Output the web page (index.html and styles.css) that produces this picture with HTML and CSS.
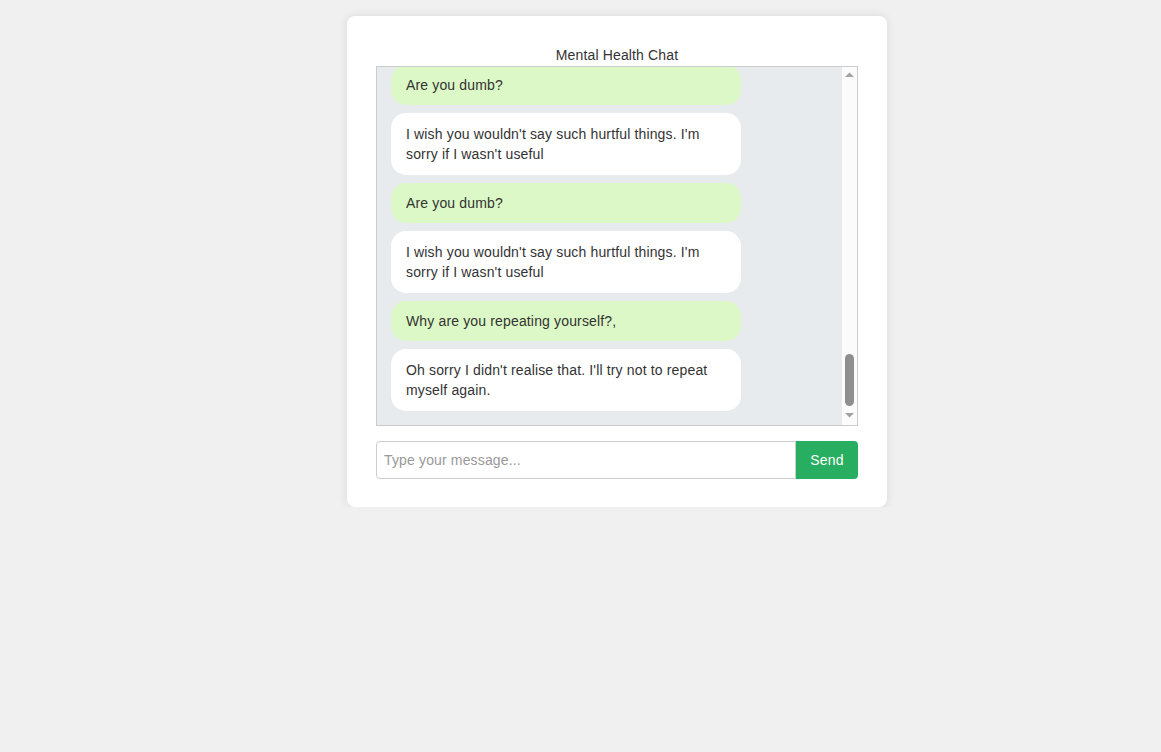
FILE: index.html
```html
<!DOCTYPE html>
<html lang="en">
<head>
<meta charset="utf-8">
<title>Mental Health Chat</title>
<link rel="stylesheet" href="styles.css">
</head>
<body>
<div class="page">
  <div class="card">
    <div class="title">Mental Health Chat</div>
    <div class="chat-box">
      <div class="messages">
        <div class="msg user">Are you dumb?</div>
        <div class="msg bot">I wish you wouldn't say such hurtful things. I'm sorry if I wasn't useful</div>
        <div class="msg user">Are you dumb?</div>
        <div class="msg bot">I wish you wouldn't say such hurtful things. I'm sorry if I wasn't useful</div>
        <div class="msg user">Why are you repeating yourself?,</div>
        <div class="msg bot">Oh sorry I didn't realise that. I'll try not to repeat myself again.</div>
      </div>
      <div class="scrollbar" aria-hidden="true">
        <div class="sb-btn sb-up">
          <svg width="15" height="15" viewBox="0 0 15 15"><polygon points="3,10 12,10 7.5,5.5" fill="#a3a3a3"/></svg>
        </div>
        <div class="sb-track">
          <div class="sb-thumb"></div>
        </div>
        <div class="sb-btn sb-down">
          <svg width="15" height="15" viewBox="0 0 15 15"><polygon points="3,3 12,3 7.5,7.5" fill="#a3a3a3"/></svg>
        </div>
      </div>
    </div>
    <form class="composer" onsubmit="return false;">
      <input class="composer-input" type="text" placeholder="Type your message...">
      <button class="composer-send" type="submit">Send</button>
    </form>
  </div>
</div>
</body>
</html>
```

FILE: styles.css
```css
html, body {
  margin: 0;
  padding: 0;
  background: #f0f0f0;
  font-family: "Liberation Sans", Arial, sans-serif;
  font-size: 14px;
  letter-spacing: 0.15px;
  color: #333;
}

.page {
  display: flex;
  justify-content: center;
  padding: 16px 0 0 73px;
}

.card {
  width: 540px;
  box-sizing: border-box;
  padding: 29px 29px 28px 29px;
  background: #fff;
  border-radius: 8px;
  box-shadow: 0 0 10px rgba(0, 0, 0, 0.1);
}

.title {
  text-align: center;
  line-height: 21px;
  font-size: 14px;
  color: #333;
}

.chat-box {
  height: 360px;
  box-sizing: border-box;
  border: 1px solid #ccc;
  background: #e8ebee;
  display: flex;
}

.messages {
  flex: 1;
  min-width: 0;
  overflow: hidden;
  display: flex;
  flex-direction: column;
  justify-content: flex-end;
  gap: 8px;
  padding: 14px;
}

.msg {
  flex-shrink: 0;
  width: 80%;
  box-sizing: border-box;
  padding: 10px 15px;
  line-height: 20px;
  border-radius: 15px;
  color: #333;
}

.msg.user {
  background: #dcf8c6;
}

.msg.bot {
  background: #fff;
  padding: 11px 15px;
}

.scrollbar {
  width: 15px;
  flex-shrink: 0;
  background: #fbfbfb;
  display: flex;
  flex-direction: column;
}

.sb-btn {
  height: 15px;
  flex-shrink: 0;
}

.sb-btn svg {
  display: block;
}

.sb-track {
  flex: 1;
  display: flex;
  flex-direction: column;
  justify-content: flex-end;
  align-items: center;
  padding-bottom: 4px;
}

.sb-thumb {
  width: 9px;
  height: 52px;
  border-radius: 5px;
  background: #8f8f8f;
}

.composer {
  display: flex;
  margin: 15px 0 0;
}

.composer-input {
  flex: 1;
  height: 38px;
  box-sizing: border-box;
  border: 1px solid #ccc;
  border-radius: 4px 0 0 4px;
  padding: 0 7px;
  font-family: "Liberation Sans", Arial, sans-serif;
  font-size: 14px;
  letter-spacing: 0.15px;
  color: #333;
  outline: none;
}

.composer-input::placeholder {
  color: #999;
}

.composer-send {
  width: 62px;
  height: 38px;
  border: none;
  border-radius: 0 4px 4px 0;
  background: #27ae60;
  color: #fff;
  font-family: "Liberation Sans", Arial, sans-serif;
  font-size: 14px;
  letter-spacing: 0.15px;
  padding: 0;
  cursor: pointer;
}
```
